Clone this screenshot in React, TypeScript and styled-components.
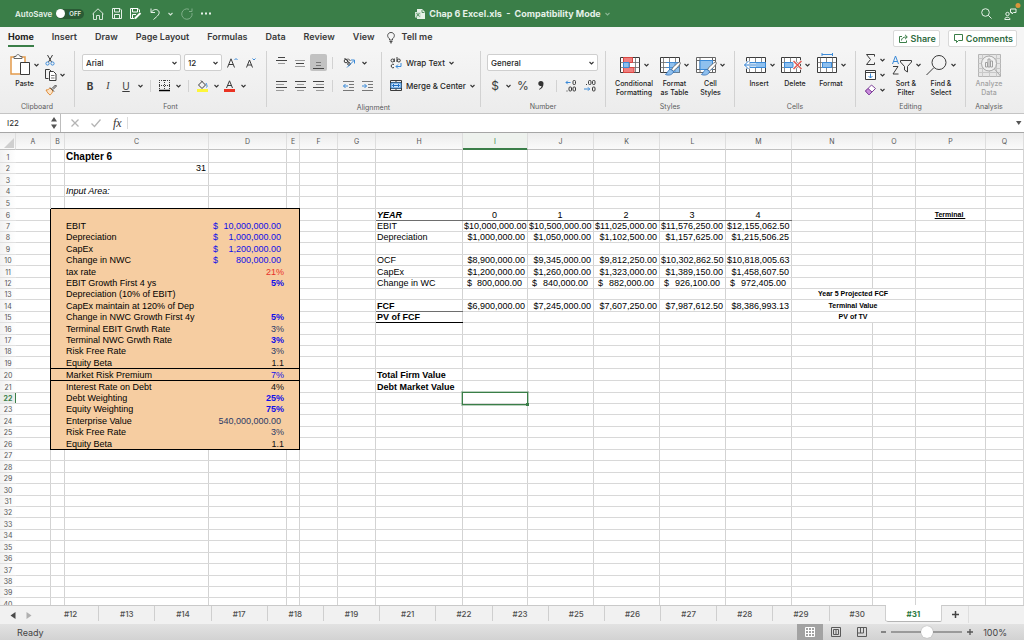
import React from "react";
import styled, { createGlobalStyle, css } from "styled-components";

const GREEN = "#3a7e48";
const INK = "#3b3b3b";
const BLUE = "#3b8ad8";

const GlobalStyle = createGlobalStyle`
  * { box-sizing: border-box; }
  html, body, #root { height: 100%; }
  body { margin: 0; font-family: Inter, "Liberation Sans", sans-serif; color: #262626; }
  button, input, select { font: inherit; color: inherit; margin: 0; padding: 0; }
  svg { display: block; flex: none; overflow: visible; }
`;

/* ---------- shell ---------- */

const Window = styled.div`
  display: flex;
  flex-direction: column;
  height: 100vh;
  overflow: hidden;
  background: #fff;
`;

const PlainButton = styled.button`
  display: flex;
  align-items: center;
  justify-content: center;
  border: 0;
  background: none;
`;

/* ---------- title bar ---------- */

const TitleBar = styled.header`
  flex: none;
  display: grid;
  grid-template-columns: 1fr auto 1fr;
  align-items: center;
  height: 27px;
  padding: 0 8px 0 15px;
  background: ${GREEN};
  color: #e6f1e8;
  line-height: 12px;
`;

const QuickAccess = styled.div`
  display: flex;
  align-items: center;
  gap: 8px;
  font-size: 8px;
  font-weight: 600;
`;

const AutoSave = styled.label`
  display: flex;
  align-items: center;
  gap: 4px;
`;

const Toggle = styled.span`
  display: flex;
  align-items: center;
  gap: 4px;
  width: 28px;
  height: 10px;
  border-radius: 5px;
  background: #2a5a35;
  font-size: 6px;
  line-height: 10px;
`;

const ToggleInput = styled.input`
  appearance: none;
  width: 9px;
  height: 9px;
  border-radius: 50%;
  background: #fff;
`;

const DocTitle = styled.h1`
  display: flex;
  align-items: center;
  gap: 4px;
  margin: 0;
  padding-right: 6px;
  font-size: 9px;
  font-weight: 700;
  white-space: pre;
`;

const TitleActions = styled.div`
  display: flex;
  align-items: center;
  justify-content: flex-end;
  gap: 12px;
`;

/* ---------- ribbon tabs ---------- */

const TabBar = styled.nav`
  flex: none;
  display: flex;
  align-items: flex-start;
  gap: 18px;
  height: 23px;
  padding: 0 7px 0 8px;
  background: #f5f5f5;
`;

const RibbonTab = styled.a<{ $active?: boolean }>`
  display: flex;
  align-items: center;
  height: 20px;
  padding-top: 2px;
  border-bottom: 2px solid ${(p) => (p.$active ? GREEN : "transparent")};
  color: ${(p) => (p.$active ? "#222" : "#3a3a3a")};
  font-size: 9px;
  font-weight: ${(p) => (p.$active ? 700 : 600)};
  line-height: 16px;
  text-decoration: none;
  white-space: nowrap;
`;

const TellMe = styled(RibbonTab)`
  gap: 7px;
  margin-left: -6px;
`;

const TabActions = styled.div`
  display: flex;
  gap: 8px;
  margin: 3px 0 0 auto;
`;

const OutlineButton = styled.button`
  display: flex;
  align-items: center;
  gap: 3px;
  height: 17px;
  padding: 0 3px 0 5px;
  border: 1px solid #d9d9d9;
  border-radius: 2px;
  background: #fff;
  color: #2f6b40;
  font-size: 9px;
  font-weight: 600;
`;

/* ---------- ribbon ---------- */

const Ribbon = styled.div`
  flex: none;
  display: flex;
  height: 64px;
  border-bottom: 1px solid #c4c4c4;
  background: linear-gradient(#f5f5f5, #ececec);
`;

const Group = styled.section<{ $w?: number }>`
  display: flex;
  flex-direction: column;
  width: ${(p) => (p.$w ? `${p.$w}px` : "auto")};
  flex: ${(p) => (p.$w ? "none" : "1")};
`;

const Divider = styled.i`
  flex: none;
  width: 1px;
  height: 12px;
  background: #d2d2d2;
`;

const GroupDivider = styled.i`
  flex: none;
  width: 1px;
  height: 56px;
  margin-top: 1px;
  background: #d2d2d2;
`;

const GroupBody = styled.div<{ $pad?: number }>`
  display: flex;
  height: 52px;
  padding: 1px 0 0 ${(p) => p.$pad ?? 0}px;
`;

const GroupLabel = styled.div`
  font-size: 7px;
  line-height: 12px;
  text-align: center;
  color: #5c5c5c;
`;

const Rows = styled.div`
  display: flex;
  flex-direction: column;
`;

const ToolRow = styled.div<{ $pad: number; $gap?: number }>`
  display: flex;
  align-items: center;
  gap: ${(p) => p.$gap ?? 0}px;
  height: 23px;
  padding-left: ${(p) => p.$pad}px;
`;

const Tool = styled(PlainButton)<{ $w: number; $on?: boolean }>`
  width: ${(p) => p.$w}px;
  height: 17px;
  border-radius: 2px;
  background: ${(p) => (p.$on ? "#c2c2c2" : "none")};
  font-size: 10px;
  color: ${INK};
`;

const BigGlyph = styled(Tool)`
  font-size: 12px;
`;

const SerifI = styled.em`
  font-family: "Liberation Serif", serif;
`;

const Spacer = styled.span<{ $w: number }>`
  flex: none;
  width: ${(p) => p.$w}px;
`;

const WrapColumn = styled.div`
  display: flex;
  width: 99px;
  margin-left: auto;
`;

const TextTool = styled(PlainButton)`
  gap: 4px;
  height: 17px;
  font-size: 8px;
  font-weight: 500;
  white-space: nowrap;
`;

const SelectBox = styled.div<{ $w: number }>`
  display: grid;
  align-items: center;
  width: ${(p) => p.$w}px;
  height: 17px;
  border: 1px solid #cfcfcf;
  border-radius: 2px;
  background: #fff;
  & > * { grid-area: 1 / 1; }
  & > svg { justify-self: end; margin-right: 3px; pointer-events: none; }
`;

const Select = styled.select`
  appearance: none;
  width: 100%;
  height: 15px;
  padding-left: 3px;
  border: 0;
  background: none;
  font-size: 8px;
  font-weight: 500;
`;

const BigButton = styled(PlainButton)<{ $w: number; $dim?: boolean }>`
  flex-direction: column;
  justify-content: flex-start;
  width: ${(p) => p.$w}px;
  font-size: 7px;
  font-weight: 500;
  line-height: 9px;
  white-space: pre;
  color: ${(p) => (p.$dim ? "#a2a2a2" : "#1f1f1f")};
`;

const BigIcon = styled.span`
  display: flex;
  align-items: center;
  gap: 4px;
  height: 28px;
`;

const SmallColumn = styled.div<{ $gap?: number }>`
  display: flex;
  flex-direction: column;
  padding-top: 1px;
  margin-left: ${(p) => p.$gap ?? 0}px;
`;

const SmallTool = styled(PlainButton)`
  justify-content: flex-start;
  gap: 4px;
  width: 24px;
  height: 15px;
`;

/* ---------- formula bar ---------- */

const FormulaBar = styled.div`
  flex: none;
  display: flex;
  align-items: center;
  height: 19px;
  border-bottom: 1px solid #a6a6a6;
  background: #fff;
`;

const NameBox = styled.div`
  display: flex;
  align-items: center;
  width: 61px;
  height: 18px;
  padding: 0 3px 0 7px;
  border-right: 1px solid #bdbdbd;
`;

const NameInput = styled.input`
  flex: 1;
  min-width: 0;
  border: 0;
  background: none;
  font-size: 8px;
`;

const FormulaTools = styled.div`
  display: flex;
  align-items: center;
  gap: 12px;
  padding: 0 5px 0 10px;
`;

const FxLabel = styled.label`
  font: italic 12px/14px "Liberation Serif", serif;
  color: #333;
`;

const FormulaInput = styled.input`
  flex: 1;
  min-width: 0;
  height: 12px;
  border: 0;
  border-left: 1px solid #dcdcdc;
  background: none;
  font-size: 8px;
`;

/* ---------- sheet ---------- */

const SheetArea = styled.main`
  flex: 1;
  min-height: 0;
  overflow: hidden;
`;

const Sheet = styled.table`
  width: 100%;
  table-layout: fixed;
  border-collapse: separate;
  border-spacing: 0;
  font-family: "Liberation Sans", Arial, sans-serif;
  font-size: 9px;
  line-height: 10px;
  color: #000;
`;

const Column = styled.col<{ $w?: number }>`
  width: ${(p) => (p.$w ? `${p.$w}px` : "auto")};
`;

const ColumnHead = styled.th<{ $active?: boolean }>`
  height: 17px;
  padding: 2px 0 0;
  border-right: 1px solid #dedede;
  border-bottom: 1px solid ${(p) => (p.$active ? GREEN : "#c0c0c0")};
  background: ${(p) => (p.$active ? "#eef2ee" : "linear-gradient(#ececec, #fafafa)")};
  box-shadow: ${(p) => (p.$active ? `inset 0 -1px ${GREEN}` : "none")};
  font-family: Inter, sans-serif;
  font-size: 7px;
  font-weight: 400;
  color: ${(p) => (p.$active ? GREEN : "#555")};
`;

const Line = styled.tr<{ $h: number }>`
  height: ${(p) => p.$h}px;
`;

const RowHead = styled.th<{ $active?: boolean }>`
  padding: 1px 0 0;
  border-bottom: 1px solid #e0e0e0;
  background: ${(p) => (p.$active ? "#e9edea" : "linear-gradient(90deg, #f2f2f2, #fff)")};
  box-shadow: ${(p) => (p.$active ? `inset -1px 0 ${GREEN}` : "none")};
  font-family: Inter, sans-serif;
  font-size: 7px;
  font-weight: ${(p) => (p.$active ? 700 : 400)};
  line-height: 9px;
  vertical-align: bottom;
  color: ${(p) => (p.$active ? GREEN : "#555")};
`;

type Kind = {
  align?: "left" | "right" | "center";
  bold?: boolean;
  italic?: boolean;
  underline?: boolean;
  size?: number;
  color?: string;
};

const edge = (color: string, side: "right" | "bottom") =>
  `linear-gradient(${color}, ${color}) ${side === "right" ? "100% 0 / 1px 100%" : "0 100% / 100% 1px"} no-repeat`;

/* Grid lines are painted as backgrounds so that dark outlines stay unbroken at the corners. */
const Cell = styled.td<{ $k: Kind; $fill?: boolean; $right: string; $bottom: string }>`
  padding: 0 3px 1px 1px;
  background: ${(p) =>
    (p.$right === "#000"
      ? [edge(p.$right, "right"), edge(p.$bottom, "bottom")]
      : [edge(p.$bottom, "bottom"), edge(p.$right, "right")]
    ).join(", ")};
  background-color: ${(p) => (p.$fill ? "#f6cda1" : "#fff")};
  text-align: ${(p) => p.$k.align ?? "left"};
  vertical-align: bottom;
  font-weight: ${(p) => (p.$k.bold ? 700 : 400)};
  font-style: ${(p) => (p.$k.italic ? "italic" : "normal")};
  text-decoration: ${(p) => (p.$k.underline ? "underline" : "none")};
  color: ${(p) => p.$k.color ?? "#000"};
  white-space: pre;
  ${(p) => p.$k.size && css`font-size: ${p.$k.size}px;`}
`;

const Accounting = styled.span`
  display: flex;
  justify-content: space-between;
  padding: 0 3px;
`;

const Selection = styled.div`
  position: relative;
  height: 10px;
  &::before {
    content: "";
    position: absolute;
    inset: -1px -3px -2px -2px;
    border: 1px solid ${GREEN};
    box-shadow: 0 0 0 1px rgba(58, 126, 72, 0.35);
  }
  &::after {
    content: "";
    position: absolute;
    right: -4px;
    bottom: -3px;
    width: 3px;
    height: 3px;
    background: ${GREEN};
  }
`;

/* ---------- sheet tabs and status ---------- */

const SheetTabs = styled.nav`
  flex: none;
  display: flex;
  height: 19px;
  border-top: 1px solid #c9c9c9;
  background: #f1f1f1;
`;

const TabScroll = styled.div`
  display: flex;
  align-items: center;
  gap: 10px;
  width: 43px;
  padding-left: 10px;
`;

const TabList = styled.div`
  flex: 1;
  display: flex;
`;

const SheetTab = styled.a<{ $active?: boolean }>`
  flex: 1;
  height: ${(p) => (p.$active ? 17 : 15)}px;
  margin-top: ${(p) => (p.$active ? -1 : 0)}px;
  border-right: 1px solid #cfcfcf;
  border-bottom: ${(p) => (p.$active ? "1px solid #b5b5b5" : "0")};
  border-radius: ${(p) => (p.$active ? "0 0 2px 2px" : "0")};
  background: ${(p) => (p.$active ? "#fff" : "none")};
  color: ${(p) => (p.$active ? "#2d7a41" : "#4f4f4f")};
  font-size: 8px;
  font-weight: ${(p) => (p.$active ? 700 : 500)};
  line-height: ${(p) => (p.$active ? 18 : 16)}px;
  text-align: center;
  text-decoration: none;
`;

const TabTail = styled.div`
  display: flex;
  width: 82px;
`;

const AddSheet = styled(PlainButton)`
  width: 27px;
  height: 17px;
  border-right: 1px solid #dedede;
`;

const StatusBar = styled.footer`
  flex: none;
  display: flex;
  align-items: center;
  justify-content: space-between;
  height: 16px;
  padding: 0 17px;
  background: linear-gradient(#e2e2e2, #d2d2d2);
  font-size: 9px;
  color: #454545;
`;

const StatusTools = styled.div`
  display: flex;
  align-items: center;
`;

const ViewButton = styled(PlainButton)<{ $active?: boolean }>`
  width: 26px;
  height: 16px;
  background: ${(p) => (p.$active ? "#a2a2a2" : "none")};
`;

const ZoomTools = styled.div`
  display: flex;
  align-items: center;
  gap: 5px;
  padding-left: 6px;
`;

const ZoomSlider = styled.input`
  appearance: none;
  width: 71px;
  height: 12px;
  background: linear-gradient(#9a9a9a, #9a9a9a) center / 100% 2px no-repeat;
  &::-webkit-slider-thumb {
    appearance: none;
    width: 12px;
    height: 12px;
    border-radius: 50%;
    background: #fff;
    box-shadow: 0 0 1px #888;
  }
`;

const ZoomValue = styled.output`
  padding-left: 5px;
`;

/* ---------- icons ---------- */

const Svg = ({ w, h, s = INK, sw = 1, children }: { w: number; h: number; s?: string; sw?: number; children: React.ReactNode }) => (
  <svg width={w} height={h} viewBox={`0 0 ${w} ${h}`} fill="none" stroke={s} strokeWidth={sw} aria-hidden="true">
    {children}
  </svg>
);

const Chevron = ({ s = "#333" }: { s?: string }) => (
  <Svg w={5} h={4} s={s} sw={1.1}><path d="M.5 1 2.5 3 4.5 1" /></Svg>
);

const AlignIcon = ({ rows }: { rows: [number, number, number, string][] }) => (
  <Svg w={11} h={12}>
    {rows.map(([y, from, to, c]) => (
      <path key={y} d={`M${from} ${y}.5H${to}`} stroke={c} />
    ))}
  </Svg>
);

const IndentIcon = ({ out }: { out?: boolean }) => (
  <Svg w={11} h={10}>
    <path d="M0 .5H11M6 3.5H11M6 6.5H11M0 9.5H11" stroke="#777" />
    <path d={out ? "M5 5H.5M2.5 3 .5 5 2.5 7" : "M0 5H4.5M2.5 3 4.5 5 2.5 7"} stroke={BLUE} />
  </Svg>
);

const GridBase = () => (
  <>
    <path d="M.5.5H19.500V15.500H.5Z" fill="#fff" />
    <path d="M.5 5.500H19.500M.5 10.500H19.500M3.500.5V15.500M9.500.5V15.500M15.500.5V15.500" stroke="#6a6a6a" strokeWidth=".8" />
  </>
);

const Brush = () => (
  <>
    <path d="M19.500 5C17 6 13 10 11.500 12.500L13.500 14C16 12 20 8 20.500 6Z" fill="#fff" stroke="#555" strokeWidth=".8" />
    <path d="M11 12.500C8.500 12 8 15 5.500 17.500C9 19 13 17.500 13.500 14.500Z" fill="#8fc0ee" stroke="#2b6cb8" strokeWidth=".8" />
  </>
);

const Solid = ({ d, w, h, c }: { d: string; w: number; h: number; c: string }) => (
  <svg width={w} height={h} viewBox={`0 0 ${w} ${h}`} aria-hidden="true"><path d={d} fill={c} /></svg>
);

const DARK = "#444";
const SOFT = "#9a9a9a";

/* ---------- sheet data ---------- */

const COLUMNS: [string, number?][] = [
  ["A", 35], ["B", 14], ["C", 144], ["D", 78], ["E", 13], ["F", 38], ["G", 38], ["H", 87],
  ["I", 65], ["J", 66], ["K", 66], ["L", 66], ["M", 66], ["N", 81], ["O", 43], ["P", 70], ["Q"],
];

const ROW_HEIGHTS = [
  13, 11, 12, 11, 12, 12, 11, 11, 12, 11, 12, 11, 11, 12, 11, 12, 11, 11, 12, 12,
  12, 11, 11, 12, 11, 12, 11, 12, 11, 12, 11, 11, 12, 11, 12, 11, 12, 11, 11, 12,
];

const VALUE = "#1010e8";
const NAVY = "#2b3a66";

type CellData = { text: string; money?: boolean; kind?: Kind; span?: number };
const CELLS: Record<string, CellData> = {
  C1: { text: "Chapter 6", kind: { bold: true, size: 10 } },
  C2: { text: "31", kind: { align: "right" } },
  C4: { text: "Input Area:", kind: { italic: true } },
  H6: { text: "YEAR", kind: { bold: true, italic: true } },
  P6: { text: "Terminal ", kind: { bold: true, underline: true, size: 7, align: "center" } },
  H7: { text: "EBIT" },
  H8: { text: "Depreciation" },
  H10: { text: "OCF" },
  H11: { text: "CapEx" },
  H12: { text: "Change in WC" },
  H14: { text: "FCF", kind: { bold: true } },
  H15: { text: "PV of FCF", kind: { bold: true } },
  H20: { text: "Total Firm Value", kind: { bold: true } },
  H21: { text: "Debt Market Value", kind: { bold: true } },
  N13: { text: "Year 5 Projected FCF", span: 2, kind: { bold: true, size: 7, align: "center" } },
  N14: { text: "Terminal Value", span: 2, kind: { bold: true, size: 7, align: "center" } },
  N15: { text: "PV of TV", span: 2, kind: { bold: true, size: 7, align: "center" } },
};

const INPUTS: { label: string; value?: string; color?: string; money?: boolean; bold?: boolean }[] = [
  { label: "EBIT", value: "10,000,000.00", color: VALUE, money: true },
  { label: "Depreciation", value: "1,000,000.00", color: VALUE, money: true },
  { label: "CapEx", value: "1,200,000.00", color: VALUE, money: true },
  { label: "Change in NWC", value: "800,000.00", color: VALUE, money: true },
  { label: "tax rate", value: "21%", color: "#e8302a" },
  { label: "EBIT Growth First 4 ys", value: "5%", color: VALUE, bold: true },
  { label: "Depreciation (10% of EBIT)" },
  { label: "CapEx maintain at 120% of Dep" },
  { label: "Change in NWC Growth First 4y", value: "5%", color: VALUE, bold: true },
  { label: "Terminal EBIT Grwth Rate", value: "3%", color: NAVY },
  { label: "Terminal NWC Grwth Rate", value: "3%", color: VALUE, bold: true },
  { label: "Risk Free Rate", value: "3%", color: NAVY },
  { label: "Equity Beta", value: "1.1", color: "#111" },
  { label: "Market Risk Premium", value: "7%", color: VALUE },
  { label: "Interest Rate on Debt", value: "4%", color: "#111" },
  { label: "Debt Weighting", value: "25%", color: VALUE, bold: true },
  { label: "Equity Weighting", value: "75%", color: VALUE, bold: true },
  { label: "Enterprise Value", value: "540,000,000.00", color: NAVY, money: true },
  { label: "Risk Free Rate", value: "3%", color: NAVY },
  { label: "Equity Beta", value: "1.1", color: "#111" },
];
INPUTS.forEach(({ label, value, color, money, bold }, i) => {
  CELLS[`C${i + 7}`] = { text: label };
  if (value) CELLS[`D${i + 7}`] = { text: value, money, kind: { align: "right", color, bold } };
});

const PROJECTION: Record<number, string[]> = {
  6: ["0", "1", "2", "3", "4"],
  7: ["$10,000,000.00", "$10,500,000.00", "$11,025,000.00", "$11,576,250.00", "$12,155,062.50"],
  8: ["$1,000,000.00", "$1,050,000.00", "$1,102,500.00", "$1,157,625.00", "$1,215,506.25"],
  10: ["$8,900,000.00", "$9,345,000.00", "$9,812,250.00", "$10,302,862.50", "$10,818,005.63"],
  11: ["$1,200,000.00", "$1,260,000.00", "$1,323,000.00", "$1,389,150.00", "$1,458,607.50"],
  12: ["800,000.00", "840,000.00", "882,000.00", "926,100.00", "972,405.00"],
  14: ["$6,900,000.00", "$7,245,000.00", "$7,607,250.00", "$7,987,612.50", "$8,386,993.13"],
};
Object.entries(PROJECTION).forEach(([row, values]) =>
  values.forEach((text, i) => {
    CELLS[`${"IJKLM"[i]}${row}`] = { text, money: row === "12", kind: { align: row === "6" ? "center" : "right" } };
  })
);

const rightLine = (col: string, row: number) => {
  const boxed = row >= 6 && row <= 26;
  if (boxed && (col === "A" || col === "E")) return "#000";
  if (boxed && "BCD".includes(col)) return "#f6cda1";
  return "#d3d3d3";
};

const bottomLine = (col: string, row: number) => {
  const inBox = "BCDE".includes(col);
  if (inBox && [5, 19, 20, 26].includes(row)) return "#000";
  if (inBox && row >= 6 && row < 26) return "#f6cda1";
  if (row === 6 && "HIJKLM".includes(col)) return "#6e6e6e";
  if (col === "H" && row === 14) return "#6e6e6e";
  if (col === "H" && row === 15) return "#000";
  return "#d8d8d8";
};

const SheetRow = ({ row, height }: { row: number; height: number }) => {
  const cells: React.ReactNode[] = [];
  for (let i = 0; i < COLUMNS.length; i++) {
    const col = COLUMNS[i][0];
    const data = CELLS[`${col}${row}`];
    cells.push(
      <Cell
        key={col}
        colSpan={data?.span}
        $k={data?.kind ?? {}}
        $fill={"BCDE".includes(col) && row >= 6 && row <= 26}
        $right={rightLine(col, row)}
        $bottom={bottomLine(col, row)}
      >
        {data?.money ? (
          <Accounting>
            <span>{row === 24 ? "" : "$"}</span>
            <span>{data.text}</span>
          </Accounting>
        ) : (
          data?.text
        )}
        {col === "I" && row === 22 && <Selection />}
      </Cell>
    );
    if (data?.span) i += data.span - 1;
  }
  return (
    <Line $h={height}>
      <RowHead scope="row" $active={row === 22}>{row}</RowHead>
      {cells}
    </Line>
  );
};

const SHEETS = ["12", "13", "14", "17", "18", "19", "21", "22", "23", "25", "26", "27", "28", "29", "30", "31"];
const TABS = ["Home", "Insert", "Draw", "Page Layout", "Formulas", "Data", "Review", "View"];

export default function App() {
  return (
    <Window>
      <GlobalStyle />
      <TitleBar>
        <QuickAccess>
          <AutoSave>
            AutoSave
            <Toggle><ToggleInput type="checkbox" />OFF</Toggle>
          </AutoSave>
          <PlainButton aria-label="Home">
            <Svg w={12} h={12} s="#d5e6d8"><path d="M.5 6 6 .8 11.500 6M1.500 5.200V11.500H4.500V7.500H7.500V11.500H10.500V5.200" /></Svg>
          </PlainButton>
          <PlainButton aria-label="Save">
            <Svg w={10} h={11} s="#e6f1e8"><path d="M.5.5H8L9.500 2V10.500H.5ZM2.500.5V4H7.500V.5M2.500 10.500V6.500H7.500V10.500" /></Svg>
          </PlainButton>
          <PlainButton aria-label="Save a copy">
            <Svg w={12} h={11} s="#fff"><path d="M4.500 10.500H.5V.5H8L9.500 2V4M2.500.5V4H7.500V.5M2.500 10.500V6.500H6" /><path d="M5 10.500 10.500 5" strokeWidth="2" /></Svg>
          </PlainButton>
          <PlainButton aria-label="Undo">
            <Svg w={10} h={12} s="#e6f1e8"><path d="M1 .5V4.500H5M1.200 4.300C3.500 1 7 .8 8.700 3C10.300 6 7.500 8 3.500 11.500" /></Svg>
          </PlainButton>
          <Chevron s="#d5e6d8" />
          <PlainButton aria-label="Redo">
            <Svg w={12} h={12} s="#7fae89"><path d="M8 1.300A5.200 5.200 0 1 0 11 5M11 .5V3.500H8" /></Svg>
          </PlainButton>
          <PlainButton aria-label="More">
            <Solid w={10} h={3} c="#e6f1e8" d="M0 .5h2v2h-2zM4 .5h2v2h-2zM8 .5h2v2h-2z" />
          </PlainButton>
        </QuickAccess>
        <DocTitle>
          <Svg w={10} h={10} s="none">
            <path d="M2 0H7L10 3V10H2Z" fill="#e6f1e8" />
            <path d="M0 3H6V8.500H0Z" fill="#cfe2d3" />
            <path d="M1.500 4 4.500 7.500M4.500 4 1.500 7.500M7 1V3.500H9.500" stroke={GREEN} strokeWidth=".8" />
          </Svg>
          Chap 6 Excel.xls  -  Compatibility Mode
          <Chevron s="#8ab694" />
        </DocTitle>
        <TitleActions>
          <PlainButton aria-label="Search">
            <Svg w={11} h={11} s="#e6f1e8"><circle cx="4.500" cy="4.500" r="3.800" /><path d="M7.300 7.300 10.500 10.500" /></Svg>
          </PlainButton>
          <PlainButton aria-label="Presence">
            <Svg w={12} h={12} s="#e6f1e8">
              <circle cx="3.500" cy="6" r="1.700" /><path d="M.8 11.500C.3 8.500 6.200 8.500 6 11.500ZM6.500 1H12V4.500H9.500L8 6V4.500H6.500Z" />
              <circle cx="14" cy="-2.500" r="2.500" fill="#d9953a" stroke="none" />
            </Svg>
          </PlainButton>
        </TitleActions>
      </TitleBar>

      <TabBar>
        {TABS.map((t) => (
          <RibbonTab key={t} href="#" $active={t === "Home"}>{t}</RibbonTab>
        ))}
        <TellMe href="#">
          <Svg w={8} h={11}><path d="M2.500 8V6.800C-1 4 1 .5 4 .5S9 4 5.500 6.800V8ZM2.500 9.500H5.500M3 10.800H5" strokeWidth=".9" /></Svg>
          Tell me
        </TellMe>
        <TabActions>
          <OutlineButton>
            <Svg w={9} h={9} s={GREEN}><path d="M3 2.500H.5V8.500H7.500V6.500M2.500 6.500C2.500 4 4.500 3 8 3M6 .8 8.300 3 6 5.200" /></Svg>
            Share
          </OutlineButton>
          <OutlineButton>
            <Svg w={9} h={9} s={GREEN}><path d="M.5.5H8.500V6.500H4.500L2.500 8.500V6.500H.5Z" /></Svg>
            Comments
          </OutlineButton>
        </TabActions>
      </TabBar>

      <Ribbon>
        <Group $w={74}>
          <GroupBody $pad={7}>
            <BigButton $w={35}>
              <BigIcon>
                <Svg w={20} h={22}>
                  <path d="M1 3H15V20H1Z" fill="#fff" stroke="#e39a4b" strokeWidth="1.500" />
                  <path d="M4 4.500V2.500H6C6 0 10 0 10 2.500H12V4.500Z" fill="#fff" stroke="#666" />
                  <path d="M10.500 8.500H19.500V20.500H10.500Z" fill="#fff" />
                </Svg>
                <Chevron />
              </BigIcon>
              Paste
            </BigButton>
            <SmallColumn $gap={3}>
              <SmallTool aria-label="Cut">
                <Svg w={10} h={12}><path d="M2.500 1 6.500 8M7.500 1 3.500 8" /><circle cx="2.500" cy="9.500" r="1.600" stroke={BLUE} /><circle cx="7.500" cy="9.500" r="1.600" stroke={BLUE} /></Svg>
              </SmallTool>
              <SmallTool aria-label="Copy">
                <Svg w={11} h={12}><path d="M3.500 9.500H.5V.5H4.500L6 2" /><path d="M4.500 2.500H8.500L11 5V11.500H4.500Z" fill="#fff" /><path d="M6 6.500H9.500M6 9H9.500" stroke="#777" /></Svg>
                <Chevron />
              </SmallTool>
              <SmallTool aria-label="Format painter">
                <Svg w={12} h={12}><path d="M1 6C3 6 4 5 5 4L8 7C7 9 6 10.500 5 11C3.500 10 2 8 1 6Z" fill="#fbe3c6" stroke="#e08a35" /><path d="M5 3.500 9 7.500M7 4.500 10.500 1 11.500 2 8 5.500" /></Svg>
              </SmallTool>
            </SmallColumn>
          </GroupBody>
          <GroupLabel>Clipboard</GroupLabel>
        </Group>

        <GroupDivider />
        <Group $w={191}>
          <GroupBody>
            <Rows>
              <ToolRow $pad={7} $gap={3}>
                <SelectBox $w={99}><Select aria-label="Font"><option>Arial</option></Select><Chevron /></SelectBox>
                <SelectBox $w={38}><Select aria-label="Font size"><option>12</option></Select><Chevron /></SelectBox>
                <Tool $w={15} aria-label="Increase font size">
                  <Svg w={11} h={10}><path d="M.5 9.500 4 .8 7.500 9.500M1.800 6.500H6.200" /><path d="M7.500 2 9 .5 10.500 2" stroke={BLUE} /></Svg>
                </Tool>
                <Tool $w={16} aria-label="Decrease font size">
                  <Svg w={10} h={10}><path d="M.5 9.500 3.500 2 6.500 9.500M1.500 7H5.500" /><path d="M6.500 .5 8 2 9.500 .5" stroke={BLUE} /></Svg>
                </Tool>
              </ToolRow>
              <ToolRow $pad={6}>
                <Tool $w={18}><b>B</b></Tool>
                <Tool $w={18}><SerifI>I</SerifI></Tool>
                <Tool $w={18}><u>U</u></Tool>
                <Tool $w={10} aria-label="Underline options"><Chevron /></Tool>
                <Spacer $w={5} /><Divider /><Spacer $w={5} />
                <Tool $w={16} aria-label="Borders">
                  <Svg w={11} h={11}><path d="M0 .5H11M.5 0V10M10.500 0V10M5.500 0V10M0 5.500H11" strokeDasharray="1 1" /><path d="M0 10.500H11" stroke="#000" strokeWidth="1.500" /></Svg>
                </Tool>
                <Tool $w={12} aria-label="Border options"><Chevron /></Tool>
                <Spacer $w={4} /><Divider /><Spacer $w={5} />
                <Tool $w={17} aria-label="Fill colour">
                  <Svg w={11} h={12}><path d="M5 1.500 8.500 5 5 8.500 1.500 5ZM4 .5 5.500 2" /><path d="M9 3C10 5 10.500 7 9.500 7.500" stroke={BLUE} /><path d="M0 10.500H11" stroke="#fdf63a" strokeWidth="3" /></Svg>
                </Tool>
                <Tool $w={10} aria-label="Fill options"><Chevron /></Tool>
                <Tool $w={17} aria-label="Font colour">
                  <Svg w={11} h={12}><path d="M2.500 8 5.500.8 8.500 8M3.500 5.500H7.500" /><path d="M0 10.500H11" stroke="#ea3323" strokeWidth="3" /></Svg>
                </Tool>
                <Tool $w={10} aria-label="Font colour options"><Chevron /></Tool>
              </ToolRow>
            </Rows>
          </GroupBody>
          <GroupLabel>Font</GroupLabel>
        </Group>

        <GroupDivider />
        <Group $w={213}>
          <GroupBody>
            <Rows>
              <ToolRow $pad={5} $gap={1}>
                <Tool $w={18} aria-label="Top align"><AlignIcon rows={[[0, 2, 9, DARK], [3, 0, 11, DARK], [6, 2, 9, SOFT]]} /></Tool>
                <Tool $w={18} aria-label="Middle align"><AlignIcon rows={[[3, 0, 10, SOFT], [6, 1, 9, DARK], [9, 0, 10, SOFT]]} /></Tool>
                <Tool $w={17} $on aria-label="Bottom align"><AlignIcon rows={[[5, 3, 8, "#777"], [8, 3, 8, "#777"], [11, 0, 11, DARK]]} /></Tool>
                <Spacer $w={3} /><Divider /><Spacer $w={3} />
                <Tool $w={21} aria-label="Orientation">
                  <Svg w={12} h={11}><circle cx="3" cy="4" r="1.800" /><circle cx="6" cy="7" r="1.300" /><path d="M1.500 1 6.500 6M5 1.500 7.500 4" /><path d="M4 10.500 11 3.500M8 3H11.500V6.500" stroke={BLUE} /></Svg>
                </Tool>
                <Tool $w={8} aria-label="Orientation options"><Chevron /></Tool>
              </ToolRow>
              <ToolRow $pad={5} $gap={1}>
                <Tool $w={18} aria-label="Align left"><AlignIcon rows={[[1, 0, 11, DARK], [4, 0, 8, SOFT], [7, 0, 11, DARK], [10, 0, 8, SOFT]]} /></Tool>
                <Tool $w={18} aria-label="Centre"><AlignIcon rows={[[1, 0, 11, DARK], [4, 2, 9, SOFT], [7, 0, 11, DARK], [10, 2, 9, SOFT]]} /></Tool>
                <Tool $w={17} aria-label="Align right"><AlignIcon rows={[[1, 0, 11, DARK], [4, 3, 11, SOFT], [7, 0, 11, DARK], [10, 3, 11, SOFT]]} /></Tool>
                <Spacer $w={3} /><Divider /><Spacer $w={4} />
                <Tool $w={18} aria-label="Decrease indent"><IndentIcon out /></Tool>
                <Tool $w={18} aria-label="Increase indent"><IndentIcon /></Tool>
              </ToolRow>
            </Rows>
            <WrapColumn>
              <GroupDivider />
              <Rows>
                <ToolRow $pad={8}>
                  <TextTool>
                    <Svg w={12} h={12}>
                      <circle cx="2.500" cy="3.500" r="1.500" /><path d="M4.300 1.500V5M7 0V5" /><circle cx="8.800" cy="3.500" r="1.500" />
                      <path d="M4 7.500A1.800 1.800 0 1 0 4 10.500" /><path d="M11 6V9.500H6M8 7.500 6 9.500 8 11.500" stroke={BLUE} />
                    </Svg>
                    Wrap Text
                    <Chevron />
                  </TextTool>
                </ToolRow>
                <ToolRow $pad={8}>
                  <TextTool>
                    <Svg w={12} h={11}>
                      <path d="M.5.5H11.500V10.500H.5ZM.5 2.500H11.500M.5 8.500H11.500M6 .5V2.500M6 8.500V10.500" />
                      <path d="M1 3H11V8H1Z" fill="#cfe5fa" stroke={BLUE} /><path d="M2.500 5.500H9.500M4 4 2.500 5.500 4 7M8 4 9.500 5.500 8 7" stroke="#1e6fc4" />
                    </Svg>
                    Merge &amp; Center
                    <Chevron />
                  </TextTool>
                </ToolRow>
              </Rows>
            </WrapColumn>
          </GroupBody>
          <GroupLabel>Alignment</GroupLabel>
        </Group>

        <GroupDivider />
        <Group $w={124}>
          <GroupBody>
            <Rows>
              <ToolRow $pad={6}>
                <SelectBox $w={111}><Select aria-label="Number format"><option>General</option></Select><Chevron /></SelectBox>
              </ToolRow>
              <ToolRow $pad={6}>
                <BigGlyph $w={16}>$</BigGlyph>
                <Tool $w={11} aria-label="Currency options"><Chevron /></Tool>
                <BigGlyph $w={18}>%</BigGlyph>
                <Tool $w={18} aria-label="Comma style">
                  <Svg w={6} h={9} s="none"><path d="M.3 2.500A2.500 2.500 0 0 1 5.500 2.500C5.600 5.500 4 7.800 1.300 8.800L1 8C2.500 7.300 3.400 6.200 3.500 5A2.500 2.500 0 0 1 .3 2.500Z" fill="#333" /></Svg>
                </Tool>
                <Spacer $w={6} /><Divider /><Spacer $w={4} />
                <Tool $w={20} aria-label="Increase decimal">
                  <Svg w={12} h={12}>
                    <path d="M5.500 2.500H1M2.700.8 1 2.500 2.700 4.200" stroke={BLUE} /><rect x="8" y=".5" width="2.500" height="4" rx="1" />
                    <rect x="4" y="7" width="2.500" height="4" rx="1" /><rect x="8" y="7" width="2.500" height="4" rx="1" /><path d="M1.500 11H2.500" />
                  </Svg>
                </Tool>
                <Tool $w={18} aria-label="Decrease decimal">
                  <Svg w={12} h={12}>
                    <rect x="4.500" y=".5" width="2.500" height="4" rx="1" /><rect x="8.500" y=".5" width="2.500" height="4" rx="1" /><path d="M2 4.500H3" />
                    <path d="M0 9H5.500M4 7.300 5.700 9 4 10.700" stroke={BLUE} /><rect x="8.500" y="7" width="2.500" height="4" rx="1" />
                  </Svg>
                </Tool>
              </ToolRow>
            </Rows>
          </GroupBody>
          <GroupLabel>Number</GroupLabel>
        </Group>

        <GroupDivider />
        <Group $w={128}>
          <GroupBody $pad={6}>
            <BigButton $w={44}>
              <BigIcon>
                <Svg w={20} h={16}>
                  <GridBase />
                  <path d="M3.500.5H12.500V5.500H3.500ZM3.500 10.500H14V15.500H3.500Z" fill="#f08080" stroke="#d9453f" />
                  <path d="M3.500 5.500H9V10.500H3.500Z" fill="#8fc0ee" stroke="#3b8ad8" />
                </Svg>
                <Chevron />
              </BigIcon>
              {"Conditional\nFormatting"}
            </BigButton>
            <BigButton $w={37}>
              <BigIcon>
                <Svg w={20} h={16}>
                  <GridBase />
                  <path d="M9.500 5.500H19.500V15.500H9.500Z" fill="#8fc0ee" stroke="none" />
                  <path d="M6 5.500H19.500M6 10.500H19.500M9.500 5V15.500M15 5V15.500" stroke="#3b8ad8" strokeWidth=".8" />
                  <Brush />
                </Svg>
                <Chevron />
              </BigIcon>
              {"Format\nas Table"}
            </BigButton>
            <BigButton $w={35}>
              <BigIcon>
                <Svg w={20} h={16}>
                  <path d="M.5.5H19.500V15.500H.5ZM.5 3.500H19.500M.5 12.500H19.500M4 .5V15.500M16.500.5V15.500" fill="#fff" stroke="#666" />
                  <path d="M4 3.500H16.500V12.500H4Z" fill="#8fc0ee" stroke={BLUE} />
                  <Brush />
                </Svg>
                <Chevron />
              </BigIcon>
              {"Cell\nStyles"}
            </BigButton>
          </GroupBody>
          <GroupLabel>Styles</GroupLabel>
        </Group>

        <GroupDivider />
        <Group $w={120}>
          <GroupBody $pad={6}>
            <BigButton $w={36}>
              <BigIcon>
                <Svg w={22} h={16}>
                  <g transform="translate(2 0)"><GridBase /></g>
                  <path d="M6 5.500H21.500V10.500H6Z" fill="#8fc0ee" stroke={BLUE} />
                  <path d="M12 8H1M5 4 1 8 5 12" stroke="#fff" strokeWidth="3" /><path d="M12 8H.5M4.500 4 .5 8 4.500 12" stroke="#2f7fd0" />
                </Svg>
                <Chevron />
              </BigIcon>
              Insert
            </BigButton>
            <BigButton $w={36}>
              <BigIcon>
                <Svg w={20} h={16}>
                  <GridBase />
                  <path d="M3.500 5.500H12V10.500H3.500Z" fill="#8fc0ee" stroke={BLUE} />
                  <path d="M12.500 4 20.500 12M20.500 4 12.500 12" stroke="#f2f2f2" strokeWidth="3" /><path d="M12.500 4 20.500 12M20.500 4 12.500 12" stroke="#e2564f" strokeWidth="1.300" />
                </Svg>
                <Chevron />
              </BigIcon>
              Delete
            </BigButton>
            <BigButton $w={36}>
              <BigIcon>
                <Svg w={20} h={16}>
                  <GridBase />
                  <path d="M5.500 5.500H14.500V10.500H5.500Z" fill="#8fc0ee" stroke={BLUE} />
                  <path d="M5 -2.500H15.500M5 -4V-1M15.500 -4V-1" stroke={BLUE} />
                </Svg>
                <Chevron />
              </BigIcon>
              Format
            </BigButton>
          </GroupBody>
          <GroupLabel>Cells</GroupLabel>
        </Group>

        <GroupDivider />
        <Group $w={109}>
          <GroupBody $pad={9}>
            <SmallColumn>
              <SmallTool aria-label="AutoSum">
                <Svg w={11} h={11}><path d="M9.500 2.500V.5H1.500L5.500 5.500 1.500 10.500H9.500V8.500" /></Svg>
                <Chevron />
              </SmallTool>
              <SmallTool aria-label="Fill">
                <Svg w={11} h={10}><path d="M.5.5H10.500V9.500H.5Z" fill="#fff" /><path d="M.5 2.500H10.500" /><path d="M5.500 3.500V8M3.500 6 5.500 8 7.500 6" stroke={BLUE} /></Svg>
                <Chevron />
              </SmallTool>
              <SmallTool aria-label="Clear">
                <Svg w={11} h={11} s="#7d3f98"><path d="M.5 7 6.500 1 10.500 4.500 4.500 10.500H3.500Z" fill="#fff" /><path d="M.5 7 3 4.500 7 8 4.500 10.500H3.500Z" fill="#c98bdc" /></Svg>
                <Chevron />
              </SmallTool>
            </SmallColumn>
            <BigButton $w={34}>
              <BigIcon>
                <Svg w={20} h={20}>
                  <path d="M.5 9 3.500 1 6.500 9M1.500 6.500H5.500" stroke={BLUE} />
                  <path d="M1 11.500H6L1 19H6.500" />
                  <path d="M8.500 5.500H19.500V7L15.500 11.500V17L12.500 15V11.500L8.500 7Z" />
                </Svg>
                <Chevron />
              </BigIcon>
              {"Sort &\nFilter"}
            </BigButton>
            <BigButton $w={36}>
              <BigIcon>
                <Svg w={21} h={20}><circle cx="13" cy="7.500" r="7" /><path d="M8 12.500.5 20" /></Svg>
                <Chevron />
              </BigIcon>
              {"Find &\nSelect"}
            </BigButton>
          </GroupBody>
          <GroupLabel>Editing</GroupLabel>
        </Group>

        <GroupDivider />
        <Group>
          <GroupBody $pad={0}>
            <BigButton $w={46} $dim disabled>
              <BigIcon>
                <Svg w={23} h={23} s="#b5b5b5">
                  <path d="M.5.5H22.500V22.500H.5Z" fill="#e6e6e6" /><path d="M.5 4.500H22.500M.5 9.500H22.500M.5 14.500H22.500M.5 18.500H22.500M4.500.5V22.500M11.500.5V22.500M18.500.5V22.500" stroke="#c8c8c8" />
                  <circle cx="11" cy="9.500" r="7.500" fill="#f0f0f0" stroke="#a8a8a8" /><path d="M16.500 15 22.500 22" stroke="#a8a8a8" />
                  <path d="M7.500 8.500H9.500V13H7.500ZM10 5H12V13H10ZM12.500 7H14.500V13H12.500Z" stroke="#a0a0a0" />
                </Svg>
              </BigIcon>
              {"Analyze\nData"}
            </BigButton>
          </GroupBody>
          <AnalysisLabel>Analysis</AnalysisLabel>
        </Group>
      </Ribbon>

      <FormulaBar>
        <NameBox>
          <NameInput aria-label="Name box" defaultValue="I22" />
          <Solid w={6} h={12} c="#555" d="M0 4.500 3 0 6 4.500ZM0 7.500 3 12 6 7.500Z" />
        </NameBox>
        <FormulaTools>
          <PlainButton aria-label="Cancel"><Svg w={8} h={8} s="#b4b4b4" sw={1.3}><path d="M.5.5 7.500 7.500M7.500.5.5 7.500" /></Svg></PlainButton>
          <PlainButton aria-label="Enter"><Svg w={10} h={8} s="#b4b4b4" sw={1.3}><path d="M.5 4.500 3.500 7.500 9.500.5" /></Svg></PlainButton>
          <FxLabel htmlFor="formula">fx</FxLabel>
        </FormulaTools>
        <FormulaInput id="formula" />
        <PlainButton aria-label="Expand formula bar"><Solid w={8} h={4} c="#555" d="M0 0H5.500L2.750 4Z" /></PlainButton>
      </FormulaBar>

      <SheetArea>
        <Sheet>
          <colgroup>
            <Column $w={16} />
            {COLUMNS.map(([name, w]) => <Column key={name} $w={w} />)}
          </colgroup>
          <thead>
            <tr>
              <ColumnHead aria-label="Select all">
                <Svg w={15} h={14} s="none"><path d="M14 3V13H4Z" fill="#cfcfcf" /></Svg>
              </ColumnHead>
              {COLUMNS.map(([name]) => <ColumnHead key={name} scope="col" $active={name === "I"}>{name}</ColumnHead>)}
            </tr>
          </thead>
          <tbody>
            {ROW_HEIGHTS.map((h, i) => <SheetRow key={i} row={i + 1} height={h} />)}
          </tbody>
        </Sheet>
      </SheetArea>

      <SheetTabs aria-label="Sheets">
        <TabScroll>
          <PlainButton aria-label="Previous sheets"><Solid w={6} h={7} c="#4a4a4a" d="M5.500 0V7L.5 3.500Z" /></PlainButton>
          <PlainButton aria-label="Next sheets"><Solid w={6} h={7} c="#b0b0b0" d="M.5 0V7L5.500 3.500Z" /></PlainButton>
        </TabScroll>
        <TabList>
          {SHEETS.map((n) => <SheetTab key={n} href="#" $active={n === "31"}>#{n}</SheetTab>)}
        </TabList>
        <TabTail>
          <AddSheet aria-label="Add sheet"><Svg w={7} h={7} s="#444" sw={1.5}><path d="M3.500 0V7M0 3.500H7" /></Svg></AddSheet>
        </TabTail>
      </SheetTabs>

      <StatusBar>
        <span>Ready</span>
        <StatusTools>
          <ViewButton $active aria-label="Normal view">
            <Svg w={10} h={10} s="#fff"><path d="M.5.5H9.500V9.500H.5ZM.5 3.500H9.500M.5 6.500H9.500M3.500.5V9.500M6.500.5V9.500" /></Svg>
          </ViewButton>
          <ViewButton aria-label="Page layout view">
            <Svg w={10} h={10} s="#5a5a5a"><path d="M.5.5H9.500V9.500H.5ZM2.500 2.500H7.500V7.500H2.500ZM4 4H6M4 6H6" /></Svg>
          </ViewButton>
          <ViewButton aria-label="Page break view">
            <Svg w={10} h={10} s="#5a5a5a"><path d="M.5.5H9.500V9.500H.5ZM3.500.5V6M6.500.5V6M.5 6H6.500" /></Svg>
          </ViewButton>
          <ZoomTools>
            <PlainButton aria-label="Zoom out"><Svg w={5} h={6} s="#555" sw={1.3}><path d="M0 3H5" /></Svg></PlainButton>
            <ZoomSlider type="range" aria-label="Zoom" defaultValue={50} />
            <PlainButton aria-label="Zoom in"><Svg w={6} h={6} s="#555" sw={1.3}><path d="M3 0V6M0 3H6" /></Svg></PlainButton>
            <ZoomValue>100%</ZoomValue>
          </ZoomTools>
        </StatusTools>
      </StatusBar>
    </Window>
  );
}

const AnalysisLabel = styled(GroupLabel)`
  width: 46px;
`;
